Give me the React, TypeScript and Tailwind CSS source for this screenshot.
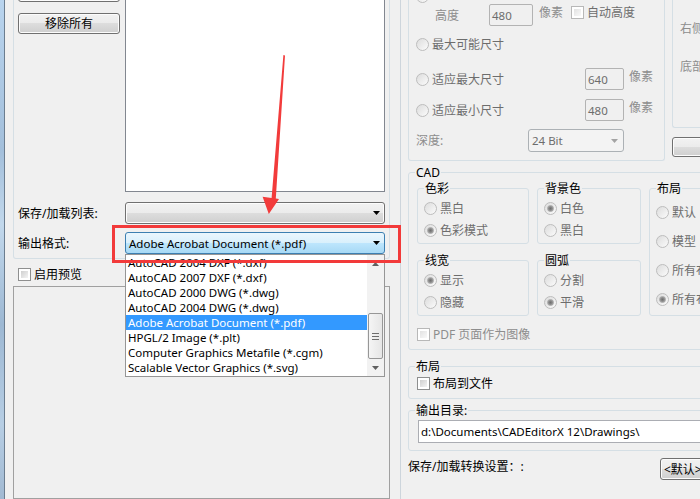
import React from "react";

type Kids = { children?: React.ReactNode; className?: string };

function Radio({ checked = false, label, className = "" }: { checked?: boolean; label: string; className?: string }) {
  return (
    <div className={"flex items-center " + className}>
      <span className="w-[13px] h-[13px] shrink-0 rounded-full border border-[#bdbdbd] bg-[linear-gradient(135deg,#dcdcdc,#fbfbfb)] flex items-center justify-center">
        {checked && (
          <span className="w-[7px] h-[7px] rounded-full border border-[#a5a5a5] bg-[radial-gradient(circle,#6f6f6f_0%,#8e8e8e_55%,#b8b8b8_100%)]" />
        )}
      </span>
      <span className="ml-[3px] text-[#6d6d6d] whitespace-nowrap">{label}</span>
    </div>
  );
}

function Check({ disabled = false }: { disabled?: boolean }) {
  return (
    <span
      className={
        disabled
          ? "w-[13px] h-[13px] shrink-0 border border-[#b8b8b8] bg-white p-[2px] flex"
          : "w-[13px] h-[13px] shrink-0 border border-[#8e8f8f] bg-white p-[2px] flex"
      }
    >
      <span
        className={
          disabled
            ? "flex-1 bg-[linear-gradient(135deg,#e2e2e2,#f9f9f9)]"
            : "flex-1 bg-[linear-gradient(135deg,#cfcfcf,#f4f4f4)]"
        }
      />
    </span>
  );
}

function Group({
  label,
  className = "",
  inner = "",
  children,
}: Kids & { label: string; inner?: string }) {
  return (
    <fieldset className={"border border-[#d5dfe5] rounded-[3px] " + className}>
      <legend className="ml-[6px] px-[1px] leading-[15px] whitespace-nowrap">{label}</legend>
      <div className={inner}>{children}</div>
    </fieldset>
  );
}

function Btn({ className = "", children }: Kids) {
  return (
    <div
      className={
        "border border-[#707070] rounded-[3px] bg-[linear-gradient(#f2f2f2_0%,#ebebeb_50%,#dddddd_50%,#cfcfcf_100%)] shadow-[inset_0_0_0_1px_#fcfcfc] flex items-center justify-center whitespace-nowrap " +
        className
      }
    >
      {children}
    </div>
  );
}

function Tri({ color = "#000" }: { color?: string }) {
  return (
    <svg width="7" height="4" viewBox="0 0 7 4" className="shrink-0">
      <path d="M0 0H7L3.5 4Z" fill={color} />
    </svg>
  );
}

function DisInput({ value, className = "" }: { value: string; className?: string }) {
  return (
    <div
      className={
        "h-[22px] shrink-0 border border-[#b3b3b3] rounded-[2px] bg-[#f0f0f0] flex items-center pl-[2px] text-[11.5px] text-[#6d6d6d] " +
        className
      }
    >
      {value}
    </div>
  );
}

const items = [
  "AutoCAD 2004 DXF (*.dxf)",
  "AutoCAD 2007 DXF (*.dxf)",
  "AutoCAD 2000 DWG (*.dwg)",
  "AutoCAD 2004 DWG (*.dwg)",
  "Adobe Acrobat Document (*.pdf)",
  "HPGL/2 Image (*.plt)",
  "Computer Graphics Metafile (*.cgm)",
  "Scalable Vector Graphics (*.svg)",
];

export default function App() {
  return (
    <div className="w-[700px] h-[499px] overflow-hidden relative bg-[#f0f0f0] flex text-[12px] leading-[15px] text-black font-['Noto_Sans','Noto_Sans_CJK_SC',sans-serif]">
      {/* window frame */}
      <div className="w-[4px] h-full shrink-0 bg-[linear-gradient(#b9d4ee_0%,#a3bfdb_30%,#c2d8ec_45%,#9db8d3_65%,#b7cee4_85%,#a1b9d2_100%)]" />
      <div className="w-[1px] h-full shrink-0 bg-[#6b7d8f]" />

      {/* left panel */}
      <div className="w-[395px] shrink-0 flex flex-col pl-[8px] pr-[10px]">
        <div className="border-x border-b border-[#d5dfe5] rounded-b-[3px] pl-[4px] pr-[4px] pb-[4px] flex flex-col">
          <div className="flex h-[192px]">
            <div className="w-[102px] shrink-0 flex flex-col">
              <Btn className="-mt-[19px] h-[21px]" />
              <Btn className="mt-[11px] h-[21px]">移除所有</Btn>
            </div>
            <div className="ml-[5px] w-[260px] h-full bg-white border-x border-b border-[#828790]" />
          </div>
          <div className="mt-[10px] h-[22px] flex items-center">
            <span className="w-[107px] shrink-0 whitespace-nowrap">保存/加载列表:</span>
            <Btn className="w-[260px] h-[22px] !justify-end pr-[4px]">
              <Tri />
            </Btn>
          </div>
          <div className="mt-[8px] h-[22px] flex items-center">
            <span className="w-[107px] shrink-0 whitespace-nowrap">输出格式:</span>
            <div className="w-[260px] h-[22px] border border-[#3c7fb1] rounded-[3px] bg-[linear-gradient(#eaf6fd_0%,#d9f0fc_50%,#bee6fd_50%,#a7d9f5_100%)] flex items-center pl-[3px] pr-[4px]">
              <span className="flex-1 whitespace-nowrap text-[11.5px]">Adobe Acrobat Document (*.pdf)</span>
              <Tri />
            </div>
          </div>
        </div>
        <div className="mt-[9px] h-[13px] flex items-center pl-[5px]">
          <Check />
          <span className="ml-[3px]">启用预览</span>
        </div>
        <div className="mt-[5px] flex-1 border border-[#a0a0a0]" />
      </div>

      {/* separator */}
      <div className="w-[1px] h-full shrink-0 bg-[#cdd5dc]" />

      {/* right panel */}
      <div className="flex-1 pl-[7px] flex flex-col">
        <div className="flex items-start">
          <div className="w-[257px] shrink-0 border-x border-b border-[#d5dfe5] rounded-b-[3px] pl-[7px] pb-[8px] flex flex-col">
            <div className="h-[16px] -mt-[12px] flex items-center">
              <Radio label="" />
            </div>
            <div className="h-[22px] flex items-center">
              <span className="ml-[19px] w-[54px] shrink-0 text-[#8d8d8d]">高度</span>
              <DisInput value="480" className="w-[44px]" />
              <span className="ml-[6px] mb-[5px] text-[#8d8d8d]">像素</span>
              <span className="ml-[8px] mb-[5px] flex items-center">
                <Check disabled />
                <span className="ml-[3px] text-[#6d6d6d] whitespace-nowrap">自动高度</span>
              </span>
            </div>
            <div className="mt-[7px] h-[22px] flex items-center">
              <Radio label="最大可能尺寸" />
            </div>
            <div className="mt-[13px] h-[22px] flex items-center">
              <Radio label="适应最大尺寸" className="w-[169px] shrink-0" />
              <DisInput value="640" className="w-[39px]" />
              <span className="ml-[5px] mb-[5px] text-[#8d8d8d]">像素</span>
            </div>
            <div className="mt-[9px] h-[22px] flex items-center">
              <Radio label="适应最小尺寸" className="w-[169px] shrink-0" />
              <DisInput value="480" className="w-[39px]" />
              <span className="ml-[5px] mb-[5px] text-[#8d8d8d]">像素</span>
            </div>
            <div className="mt-[8px] h-[23px] flex items-center">
              <span className="w-[112px] shrink-0 text-[#8d8d8d]">深度:</span>
              <div className="w-[96px] h-[23px] border border-[#acb1b5] rounded-[3px] bg-[#f3f3f3] flex items-center pl-[3px] pr-[5px] text-[11.5px] text-[#6d6d6d]">
                <span className="flex-1">24 Bit</span>
                <Tri color="#a3a3a3" />
              </div>
            </div>
          </div>
          <div className="ml-[7px] w-[80px] shrink-0 flex flex-col">
            <div className="h-[128px] border-l border-b border-[#d5dfe5] rounded-bl-[3px] pl-[7px] pt-[21px] flex flex-col text-[#8d8d8d]">
              <span className="h-[16px] leading-[16px] whitespace-nowrap">右侧</span>
              <span className="mt-[22px] h-[16px] leading-[16px] whitespace-nowrap">底部</span>
            </div>
            <Btn className="mt-[9px] h-[20px] w-[60px]" />
          </div>
        </div>

        <Group label="CAD" className="mt-[4px] w-[400px] shrink-0" inner="pl-[8px] pb-[8px]">
          <div className="flex mt-[1px]">
            <div className="flex flex-col">
              <div className="flex">
                <Group label="色彩" className="w-[112px] shrink-0" inner="pl-[6px] pb-[2px]">
                  <div className="mt-[1px] h-[22px] flex items-center">
                    <Radio label="黑白" />
                  </div>
                  <div className="h-[22px] flex items-center">
                    <Radio checked label="色彩模式" />
                  </div>
                </Group>
                <Group label="背景色" className="ml-[8px] w-[104px] shrink-0" inner="pl-[6px] pb-[2px]">
                  <div className="mt-[1px] h-[22px] flex items-center">
                    <Radio checked label="白色" />
                  </div>
                  <div className="h-[22px] flex items-center">
                    <Radio label="黑白" />
                  </div>
                </Group>
              </div>
              <div className="flex mt-[9px]">
                <Group label="线宽" className="w-[112px] shrink-0" inner="pl-[6px] pb-[2px]">
                  <div className="mt-[1px] h-[22px] flex items-center">
                    <Radio checked label="显示" />
                  </div>
                  <div className="h-[22px] flex items-center">
                    <Radio label="隐藏" />
                  </div>
                </Group>
                <Group label="圆弧" className="ml-[8px] w-[104px] shrink-0" inner="pl-[6px] pb-[2px]">
                  <div className="mt-[1px] h-[22px] flex items-center">
                    <Radio label="分割" />
                  </div>
                  <div className="h-[22px] flex items-center">
                    <Radio checked label="平滑" />
                  </div>
                </Group>
              </div>
            </div>
            <Group label="布局" className="ml-[8px] w-[100px] shrink-0" inner="pl-[6px] pb-[1px]">
              <div className="mt-[2px] h-[29px] flex items-center">
                <Radio label="默认" />
              </div>
              <div className="h-[29px] flex items-center">
                <Radio label="模型" />
              </div>
              <div className="h-[29px] flex items-center">
                <Radio label="所有布局" />
              </div>
              <div className="h-[29px] flex items-center">
                <Radio checked label="所有布局" />
              </div>
            </Group>
          </div>
          <div className="mt-[12px] h-[13px] flex items-center">
            <Check disabled />
            <span className="ml-[3px] text-[#8d8d8d] whitespace-nowrap">PDF 页面作为图像</span>
          </div>
        </Group>

        <Group label="布局" className="mt-[9px] w-[400px] shrink-0" inner="pl-[8px] pb-[8px]">
          <div className="mt-[3px] h-[13px] flex items-center">
            <Check />
            <span className="ml-[3px] whitespace-nowrap">布局到文件</span>
          </div>
        </Group>

        <Group label="输出目录:" className="mt-[4px] w-[400px] shrink-0" inner="pl-[9px] pb-[7px]">
          <div className="mt-[2px] h-[23px] w-[400px] bg-white border border-[#abadb3] flex items-center pl-[2px] whitespace-nowrap text-[11.5px]">
            {"d:\\Documents\\CADEditorX 12\\Drawings\\"}
          </div>
        </Group>

        <div className="mt-[7px] flex items-start">
          <span className="w-[252px] shrink-0 mt-[1px] whitespace-nowrap">保存/加载转换设置：:</span>
          <Btn className="h-[22px] w-[60px] shrink-0 !justify-start pl-[3px]">{"<默认>"}</Btn>
        </div>
      </div>

      {/* dropdown list */}
      <div className="absolute left-[125px] top-[254px] w-[260px] h-[123px] bg-white border border-[#969696] flex">
        <div className="flex-1 flex flex-col">
          {items.map((t, i) => (
            <div
              key={i}
              className={
                i === 4
                  ? "h-[15px] leading-[15px] pl-[2px] text-[11.5px] bg-[#3399ff] text-white whitespace-nowrap"
                  : "h-[15px] leading-[15px] pl-[2px] text-[11.5px] whitespace-nowrap"
              }
            >
              {t}
            </div>
          ))}
        </div>
        <div className="w-[17px] shrink-0 bg-[#f2f2f2] flex flex-col">
          <div className="h-[17px] flex items-center justify-center">
            <svg width="7" height="4" viewBox="0 0 7 4">
              <path d="M0 4H7L3.5 0Z" fill="#606060" />
            </svg>
          </div>
          <div className="flex-1 flex flex-col">
            <div className="mt-[41px] flex-1 mx-[1px] border border-[#979797] rounded-[2px] bg-[linear-gradient(90deg,#f5f5f5,#e6e6e6)] flex flex-col items-center justify-center gap-[2px]">
              <span className="w-[7px] h-[1px] bg-[#6d6d6d]" />
              <span className="w-[7px] h-[1px] bg-[#6d6d6d]" />
              <span className="w-[7px] h-[1px] bg-[#6d6d6d]" />
            </div>
          </div>
          <div className="h-[17px] flex items-center justify-center">
            <Tri color="#606060" />
          </div>
        </div>
      </div>

      {/* red highlight */}
      <div className="absolute left-[112px] top-[225px] w-[289px] h-[38px] border-[3px] border-[#f23a3a]" />

      {/* red arrow */}
      <svg className="absolute left-0 top-0 pointer-events-none" width="700" height="499" viewBox="0 0 700 499">
        <polygon
          points="283.4,55 285,55.6 275.8,198.5 279,199 268.8,214 262.6,196.8 271.6,198"
          fill="#f23b3b"
        />
      </svg>
    </div>
  );
}
